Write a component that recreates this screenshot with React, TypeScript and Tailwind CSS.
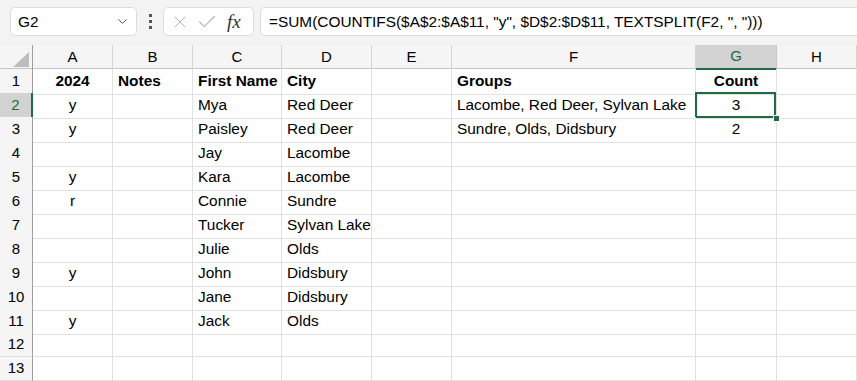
import { ChevronDown, X, Check } from "lucide-react";

const cols = ["A", "B", "C", "D", "E", "F", "G", "H"];

// one entry per row: [A, B, C, D, E, F, G]
const rows: string[][] = [
  ["2024", "Notes", "First Name", "City", "", "Groups", "Count"],
  ["y", "", "Mya", "Red Deer", "", "Lacombe, Red Deer, Sylvan Lake", "3"],
  ["y", "", "Paisley", "Red Deer", "", "Sundre, Olds, Didsbury", "2"],
  ["", "", "Jay", "Lacombe", "", "", ""],
  ["y", "", "Kara", "Lacombe", "", "", ""],
  ["r", "", "Connie", "Sundre", "", "", ""],
  ["", "", "Tucker", "Sylvan Lake", "", "", ""],
  ["", "", "Julie", "Olds", "", "", ""],
  ["y", "", "John", "Didsbury", "", "", ""],
  ["", "", "Jane", "Didsbury", "", "", ""],
  ["y", "", "Jack", "Olds", "", "", ""],
  ["", "", "", "", "", "", ""],
  ["", "", "", "", "", "", ""],
];

const gridCols = "grid grid-cols-[33px_80px_80px_89px_90px_80px_244px_81px_1fr]";

export default function App() {
  return (
    <div className="w-[857px] h-[381px] overflow-hidden bg-white text-black font-['Liberation_Sans',Arial,sans-serif]">
      {/* Formula bar */}
      <div className="h-[45px] bg-[#f3f3f3] flex items-start pt-[7px] pl-[10px]">
        <div className="w-[127px] h-[29px] bg-white border border-[#dcdcdc] rounded-[5px] flex items-center pl-[7px] pr-[6px] justify-between">
          <span className="text-[15.4px]">G2</span>
          <ChevronDown className="w-[15px] h-[15px] text-[#444]" strokeWidth={1.5} />
        </div>
        <div className="w-[26px] h-[29px] flex flex-col items-center justify-center gap-[3px]">
          <span className="w-[3px] h-[3px] bg-[#555]" />
          <span className="w-[3px] h-[3px] bg-[#555]" />
          <span className="w-[3px] h-[3px] bg-[#555]" />
        </div>
        <div className="w-[91px] h-[29px] bg-white border border-[#dcdcdc] rounded-[5px] flex items-center pl-[6px] gap-[6px]">
          <X className="w-[20px] h-[20px] text-[#b4b4b4]" strokeWidth={1.2} />
          <Check className="w-[22px] h-[22px] text-[#b4b4b4]" strokeWidth={1.2} />
          <span className="text-[19px] italic font-['Liberation_Serif',serif] text-[#333] ml-[3px] leading-none">fx</span>
        </div>
        <div className="ml-[6px] flex-1 h-[29px] bg-white border border-[#dcdcdc] rounded-l-[5px] border-r-0 flex items-center pl-[8px]">
          <span className="text-[15.4px] whitespace-nowrap">=SUM(COUNTIFS($A$2:$A$11, "y", $D$2:$D$11, TEXTSPLIT(F2, ", ")))</span>
        </div>
      </div>

      {/* Column headers */}
      <div className={`${gridCols} h-[24px] bg-[#f5f5f5] border-b border-[#c6c6c6]`}>
        <div className="border-r border-[#9e9e9e] flex items-end justify-end pr-[3px] pb-[3px]">
          <svg width="16" height="15" viewBox="0 0 16 15">
            <polygon points="16,0 16,15 0,15" fill="#bdbdbd" />
          </svg>
        </div>
        {cols.map((c) => (
          <div
            key={c}
            className={
              c === "G"
                ? "flex items-center justify-center text-[15px] bg-[#d2d2d2] text-[#1e6b3e] border-b-2 border-[#1e6b3e] border-r border-r-[#c6c6c6]"
                : "flex items-center justify-center text-[15px] border-r border-[#d4d4d4]"
            }
          >
            {c}
          </div>
        ))}
      </div>

      {/* Rows */}
      {rows.map((r, i) => {
        const n = i + 1;
        const header = n === 1;
        return (
          <div key={n} className={`${gridCols} h-[24px]`}>
            <div
              className={
                n === 2
                  ? "bg-[#d2d2d2] text-[#1e6b3e] border-r-2 border-[#1e6b3e] border-b border-b-[#d4d4d4] flex items-center justify-center text-[15px]"
                  : "bg-[#f5f5f5] border-r border-[#9e9e9e] border-b border-b-[#e1e1e1] flex items-center justify-center text-[15px]"
              }
            >
              {n}
            </div>
            {r.map((v, j) => {
              const center = j === 0 || j === 6;
              const selected = n === 2 && j === 6;
              return (
                <div
                  key={j}
                  className={
                    "relative flex items-end pb-[2px] text-[15.4px] whitespace-nowrap border-r border-b border-[#e1e1e1] " +
                    (center ? "justify-center " : "pl-[5px] ") +
                    (header ? "font-bold" : "")
                  }
                >
                  {v}
                  {selected && (
                    <>
                      <div className="absolute -left-[1px] -top-[1px] right-0 bottom-0 border-2 border-[#1e6b3e]" />
                      <div className="absolute -right-[4px] -bottom-[4px] w-[7px] h-[7px] bg-[#1e6b3e] border border-white z-10" />
                    </>
                  )}
                </div>
              );
            })}
            <div className="border-r border-b border-[#e1e1e1]" />
          </div>
        );
      })}
    </div>
  );
}
